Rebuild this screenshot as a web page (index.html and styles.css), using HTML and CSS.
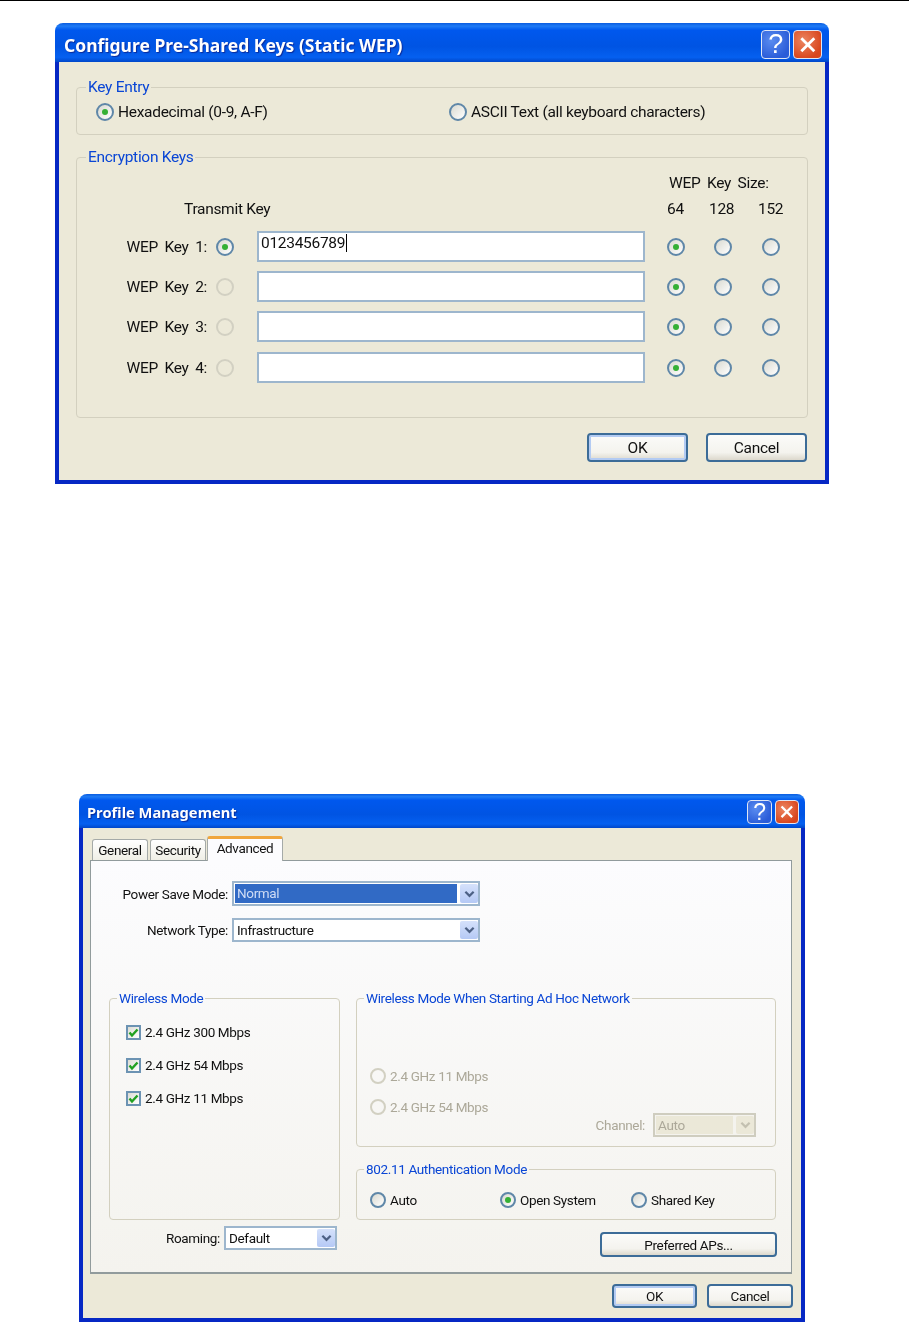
FILE: index.html
```html
<!DOCTYPE html>
<html lang="en">
<head>
    <meta charset="UTF-8">
    <meta name="viewport" content="width=device-width, initial-scale=1.0">
    <title>Wireless configuration dialogs</title>
    <link rel="stylesheet" href="styles.css">
</head>
<body>
    <!-- first dialog: static WEP keys -->
    <div class="dialog dialog-wep">
        <div class="title-bar">
            <span class="title-text">Configure Pre-Shared Keys (Static WEP)</span>
            <span class="cap-btn cap-help">?</span>
            <span class="cap-btn cap-close">
                <svg viewBox="0 0 20 20"><path d="M4 4l12 12M16 4L4 16"/></svg>
            </span>
        </div>
        <div class="dialog-body">
            <fieldset class="group key-entry">
                <legend>Key Entry</legend>
                <div class="key-entry-row">
                    <label class="option"><span class="radio on"></span>Hexadecimal (0-9, A-F)</label>
                    <label class="option"><span class="radio"></span>ASCII Text (all keyboard characters)</label>
                </div>
            </fieldset>

            <fieldset class="group enc-keys">
                <legend>Encryption Keys</legend>
                <div class="key-grid size-title">
                    <span class="size-caption">WEP Key Size:</span>
                </div>
                <div class="key-grid size-head">
                    <span class="transmit">Transmit Key</span>
                    <span class="size-64">64</span>
                    <span class="size-128">128</span>
                    <span class="size-152">152</span>
                </div>

                <div class="key-grid key-row">
                    <span class="key-label">WEP Key 1:</span>
                    <span class="tx-cell"><span class="radio on"></span></span>
                    <div class="text-box"><span class="typed">0123456789</span></div>
                    <span class="size-cell"><span class="radio on"></span></span>
                    <span class="size-cell"><span class="radio"></span></span>
                    <span class="size-cell"><span class="radio"></span></span>
                </div>
                <div class="key-grid key-row">
                    <span class="key-label">WEP Key 2:</span>
                    <span class="tx-cell"><span class="radio off"></span></span>
                    <div class="text-box"></div>
                    <span class="size-cell"><span class="radio on"></span></span>
                    <span class="size-cell"><span class="radio"></span></span>
                    <span class="size-cell"><span class="radio"></span></span>
                </div>
                <div class="key-grid key-row">
                    <span class="key-label">WEP Key 3:</span>
                    <span class="tx-cell"><span class="radio off"></span></span>
                    <div class="text-box"></div>
                    <span class="size-cell"><span class="radio on"></span></span>
                    <span class="size-cell"><span class="radio"></span></span>
                    <span class="size-cell"><span class="radio"></span></span>
                </div>
                <div class="key-grid key-row">
                    <span class="key-label">WEP Key 4:</span>
                    <span class="tx-cell"><span class="radio off"></span></span>
                    <div class="text-box"></div>
                    <span class="size-cell"><span class="radio on"></span></span>
                    <span class="size-cell"><span class="radio"></span></span>
                    <span class="size-cell"><span class="radio"></span></span>
                </div>
            </fieldset>

            <div class="button-row">
                <button class="xp-btn default">OK</button>
                <button class="xp-btn cancel">Cancel</button>
            </div>
        </div>
    </div>

    <!-- second dialog: profile management, advanced tab -->
    <div class="dialog dialog-profile">
        <div class="title-bar">
            <span class="title-text">Profile Management</span>
            <span class="cap-btn cap-help">?</span>
            <span class="cap-btn cap-close">
                <svg viewBox="0 0 20 20"><path d="M4 4l12 12M16 4L4 16"/></svg>
            </span>
        </div>
        <div class="dialog-body">
            <div class="tabs">
                <span class="tab">General</span>
                <span class="tab">Security</span>
                <span class="tab active">Advanced</span>
            </div>
            <div class="tab-panel">
                <div class="form-row first">
                    <span class="form-label">Power Save Mode:</span>
                    <div class="combo wide tall">
                        <span class="combo-value selected">Normal</span>
                        <span class="combo-arrow"><svg class="chevron" viewBox="0 0 12 8"><path d="M1.5 1.5L6 6l4.5-4.5"/></svg></span>
                    </div>
                </div>
                <div class="form-row">
                    <span class="form-label">Network Type:</span>
                    <div class="combo wide">
                        <span class="combo-value">Infrastructure</span>
                        <span class="combo-arrow"><svg class="chevron" viewBox="0 0 12 8"><path d="M1.5 1.5L6 6l4.5-4.5"/></svg></span>
                    </div>
                </div>

                <div class="columns">
                    <div class="col-left">
                        <fieldset class="group wireless">
                            <legend>Wireless Mode</legend>
                            <div class="wireless-list">
                                <label class="option"><span class="check"><svg viewBox="2 2 11 11"><path d="M3.5 7.5L6 10.5l5.5-6"/></svg></span>2.4 GHz 300 Mbps</label>
                                <label class="option"><span class="check"><svg viewBox="2 2 11 11"><path d="M3.5 7.5L6 10.5l5.5-6"/></svg></span>2.4 GHz 54 Mbps</label>
                                <label class="option"><span class="check"><svg viewBox="2 2 11 11"><path d="M3.5 7.5L6 10.5l5.5-6"/></svg></span>2.4 GHz 11 Mbps</label>
                            </div>
                        </fieldset>
                        <div class="roaming">
                            <span>Roaming:</span>
                            <div class="combo short">
                                <span class="combo-value">Default</span>
                                <span class="combo-arrow"><svg class="chevron" viewBox="0 0 12 8"><path d="M1.5 1.5L6 6l4.5-4.5"/></svg></span>
                            </div>
                        </div>
                    </div>

                    <div class="col-right">
                        <fieldset class="group adhoc">
                            <legend>Wireless Mode When Starting Ad Hoc Network</legend>
                            <div class="adhoc-body">
                                <div class="adhoc-radios">
                                    <label class="option dim"><span class="radio off"></span>2.4 GHz 11 Mbps</label>
                                    <label class="option dim"><span class="radio off"></span>2.4 GHz 54 Mbps</label>
                                </div>
                                <div class="channel">
                                    <span>Channel:</span>
                                    <div class="combo short-dim disabled">
                                        <span class="combo-value">Auto</span>
                                        <span class="combo-arrow"><svg class="chevron" viewBox="0 0 12 8"><path d="M1.5 1.5L6 6l4.5-4.5"/></svg></span>
                                    </div>
                                </div>
                            </div>
                        </fieldset>
                        <fieldset class="group auth">
                            <legend>802.11 Authentication Mode</legend>
                            <div class="auth-row">
                                <label class="option"><span class="radio"></span>Auto</label>
                                <label class="option"><span class="radio on"></span>Open System</label>
                                <label class="option"><span class="radio"></span>Shared Key</label>
                            </div>
                        </fieldset>
                        <button class="xp-btn preferred">Preferred APs...</button>
                    </div>
                </div>
            </div>
            <div class="button-row">
                <button class="xp-btn default">OK</button>
                <button class="xp-btn cancel">Cancel</button>
            </div>
        </div>
    </div>
</body>
</html>
```

FILE: styles.css
```css
* {
    box-sizing: border-box;
}
body {
    margin: 0;
    height: 1322px;
    overflow: hidden;
    background: #fff;
    border-top: 1px solid #000;
    font-family: Roboto, "Liberation Sans", Arial, sans-serif;
    color: #111;
}

/* window frame */
.dialog {
    filter: blur(0.4px);
}
.dialog-wep {
    width: 774px;
    margin: 22px 0 0 55px;
    font-size: 15.5px;
    letter-spacing: -0.3px;
}
.dialog-profile {
    width: 726px;
    height: 528px;
    margin: 310px 0 0 79px;
    font-size: 13.5px;
    letter-spacing: -0.35px;
}
.title-bar {
    display: flex;
    align-items: center;
    gap: 3px;
    border-radius: 8px 8px 0 0;
    background: linear-gradient(#0a5ce0 0%, #1f7bf5 8%, #0058ee 18%, #0054e3 60%, #0560f0 88%, #0047c9 100%);
}
.dialog-wep .title-bar {
    height: 39px;
    padding: 4px 7px 0 9px;
}
.dialog-profile .title-bar {
    height: 34px;
    padding: 2px 6px 0 8px;
}
.title-text {
    flex: 1;
    color: #fff;
    font-family: "Noto Sans", sans-serif;
    font-weight: bold;
    letter-spacing: 0;
    text-shadow: 1px 1px 1px #0a2a9a;
}
.dialog-wep .title-text {
    font-size: 17.5px;
}
.dialog-profile .title-text {
    font-size: 14.7px;
}
.cap-btn {
    display: flex;
    align-items: center;
    justify-content: center;
    border: 1px solid #dfe6f5;
    border-radius: 4px;
    color: #fff;
    font-family: "Liberation Sans", sans-serif;
}
.dialog-wep .cap-btn {
    width: 29px;
    height: 29px;
    font-size: 27px;
}
.dialog-profile .cap-btn {
    width: 25px;
    height: 24px;
    font-size: 23px;
}
.dialog-profile .cap-close {
    width: 24px;
}
.cap-help {
    background: radial-gradient(circle at 35% 35%, #5a8cf0, #2a5cd8 75%);
}
.cap-close {
    background: radial-gradient(circle at 35% 35%, #ec8560, #d8451c 75%);
}
.cap-close svg {
    width: 80%;
    height: 80%;
}
.cap-close path {
    fill: none;
    stroke: #fff;
    stroke-width: 2.6;
}
.dialog-body {
    background: #ece9d8;
    border: solid #0628c4;
    border-width: 0 4px 4px;
}
.dialog-wep .dialog-body {
    height: 422px;
    padding: 16px 17px 0;
}
.dialog-profile .dialog-body {
    height: 494px;
    padding: 8px 9px 0 7px;
}

/* group boxes */
.group {
    margin: 0;
    padding: 0;
    min-width: 0;
    border: 1px solid #d3d0bf;
    border-radius: 4px;
}
.group legend {
    margin-left: 9px;
    padding: 0 2px;
    line-height: 18px;
    color: #0a46d5;
}
.dialog-profile .group legend {
    margin-left: 7px;
}
.option {
    display: flex;
    align-items: center;
    gap: 4px;
    height: 18px;
}
.dim {
    color: #aca899;
}
.radio {
    display: inline-flex;
    align-items: center;
    justify-content: center;
    flex: none;
    border: 2px solid #5f87a8;
    border-radius: 50%;
    background: linear-gradient(135deg, #d9d9d0, #fff);
}
.dialog-wep .radio {
    width: 18px;
    height: 18px;
}
.dialog-profile .radio {
    width: 16px;
    height: 16px;
}
.radio.on::after {
    content: "";
    width: 6px;
    height: 6px;
    border-radius: 50%;
    background: #35b035;
}
.radio.off {
    border-color: #d2d0c2;
    background: none;
}
.check {
    display: flex;
    flex: none;
    width: 15px;
    height: 15px;
    border: 2px solid #6c93b3;
    background: linear-gradient(135deg, #dcdcd4, #fff);
}
.check path {
    fill: none;
    stroke: #21a121;
    stroke-width: 2.4;
}

/* key entry */
.key-entry {
    height: 57px;
}
.key-entry-row {
    display: grid;
    grid-template-columns: 353px 1fr;
    margin-top: 7px;
    padding-left: 19px;
}
.enc-keys {
    height: 270px;
    margin-top: 13px;
}
.key-grid {
    display: grid;
    grid-template-columns: 130px 50px 388px 47px 48px 48px;
    align-items: center;
}
.size-title {
    height: 18px;
    margin-top: 8px;
}
.size-caption {
    grid-column: 4 / 7;
    padding-left: 24px;
    word-spacing: 3px;
}
.size-head {
    height: 18px;
    margin-top: 8px;
    margin-bottom: 13px;
}
.transmit {
    grid-column: 1 / 4;
    padding-left: 107px;
}
.size-64 {
    padding-left: 22px;
}
.size-128 {
    padding-left: 17px;
}
.size-152 {
    padding-left: 18px;
}
.key-row {
    height: 31px;
    margin-top: 9px;
}
.key-row:last-child {
    margin-top: 10px;
}
.key-label {
    text-align: right;
    word-spacing: 3px;
}
.tx-cell {
    display: flex;
    padding-left: 9px;
}
.size-cell {
    display: flex;
    padding-left: 22px;
}
.text-box {
    height: 31px;
    padding: 0 2px;
    border: 2px solid #9db6cd;
    background: #fff;
    line-height: 20px;
}
.typed {
    padding-right: 1px;
    border-right: 1px solid #000;
}

/* buttons */
.button-row {
    display: flex;
    justify-content: flex-end;
}
.dialog-wep .button-row {
    gap: 18px;
    margin: 15px 1px 0 0;
}
.dialog-profile .button-row {
    gap: 10px;
    margin: 10px -1px 0 0;
}
.xp-btn {
    padding: 0;
    border: 2px solid #3c6c98;
    border-radius: 4px;
    background: linear-gradient(#fbfbf9, #f4f3ee 70%, #dcd8cc);
    font: inherit;
    letter-spacing: inherit;
    color: #111;
}
.xp-btn.default {
    box-shadow: inset 0 0 0 2px #b3cbf3;
}
.dialog-wep .xp-btn {
    width: 101px;
    height: 29px;
}
.dialog-profile .xp-btn {
    width: 85px;
    height: 24px;
}
.dialog-profile .xp-btn.cancel {
    width: 86px;
}
.dialog-profile .xp-btn.preferred {
    display: block;
    width: 177px;
    height: 25px;
    margin: 12px -1px 0 auto;
}

/* tabs */
.tabs {
    display: flex;
    align-items: flex-end;
    gap: 2px;
    padding-left: 2px;
    height: 24px;
}
.tab {
    position: relative;
    width: 56px;
    height: 21px;
    border: 1px solid #a5aaa8;
    border-bottom: 0;
    border-radius: 3px 3px 0 0;
    background: linear-gradient(#fff, #f0efe6);
    text-align: center;
    line-height: 20px;
}
.tab.active {
    z-index: 1;
    width: 76px;
    height: 25px;
    margin-bottom: -1px;
    margin-left: -1px;
    border-top: 3px solid #f0a63c;
    background: #fcfcfe;
    line-height: 18px;
}
.tab-panel {
    height: 414px;
    border: 1px solid #919b9c;
    border-bottom-width: 2px;
    background: linear-gradient(#fcfcfe, #f4f3ee);
}

/* form rows in the panel */
.form-row {
    display: grid;
    grid-template-columns: 137px 248px;
    column-gap: 4px;
    align-items: center;
    margin-top: 12px;
}
.form-row.first {
    margin-top: 20px;
}
.form-label {
    text-align: right;
}
.combo {
    display: flex;
    align-items: stretch;
    gap: 3px;
    height: 24px;
    padding: 1px 0 1px 1px;
    border: 2px solid #9db6cd;
    background: #fff;
}
.combo.tall {
    height: 25px;
}
.combo-value {
    flex: 1;
    padding-left: 2px;
    line-height: 19px;
}
.combo-value.selected {
    background: #316ac5;
    color: #cfdcf5;
}
.combo-arrow {
    display: flex;
    align-items: center;
    justify-content: center;
    width: 18px;
    border-radius: 2px;
    background: linear-gradient(#d5e1fb, #b5c9f5);
}
.chevron {
    width: 11px;
    height: 8px;
}
.chevron path {
    fill: none;
    stroke: #4d6185;
    stroke-width: 2.4;
}
.combo.disabled {
    border-color: #cfcdbf;
    background: #f4f3ee;
    color: #aca899;
}
.combo.disabled .combo-value {
    background: #ebe8d8;
}
.combo.disabled .combo-arrow {
    background: #ebe8d8;
}
.combo.disabled .chevron path {
    stroke: #c3c0b0;
}

/* lower part of the panel */
.columns {
    display: grid;
    grid-template-columns: 231px 420px;
    column-gap: 16px;
    margin: 47px 0 0 18px;
}
.wireless {
    height: 231px;
}
.wireless-list {
    display: flex;
    flex-direction: column;
    gap: 15px;
    padding: 16px 0 0 16px;
}
.roaming {
    display: flex;
    justify-content: flex-end;
    align-items: center;
    gap: 4px;
    margin-top: 6px;
    margin-right: 3px;
}
.combo.short {
    width: 113px;
}
.adhoc {
    height: 158px;
}
.adhoc-body {
    display: flex;
    justify-content: space-between;
    align-items: flex-end;
    padding: 60px 19px 0 13px;
}
.adhoc-radios {
    display: flex;
    flex-direction: column;
    gap: 13px;
    padding-bottom: 21px;
}
.channel {
    display: flex;
    align-items: center;
    gap: 8px;
    color: #aca899;
}
.combo.short-dim {
    width: 103px;
}
.auth {
    height: 60px;
    margin-top: 13px;
}
.auth-row {
    display: grid;
    grid-template-columns: 130px 131px 1fr;
    margin-top: 13px;
    padding-left: 13px;
}
```
